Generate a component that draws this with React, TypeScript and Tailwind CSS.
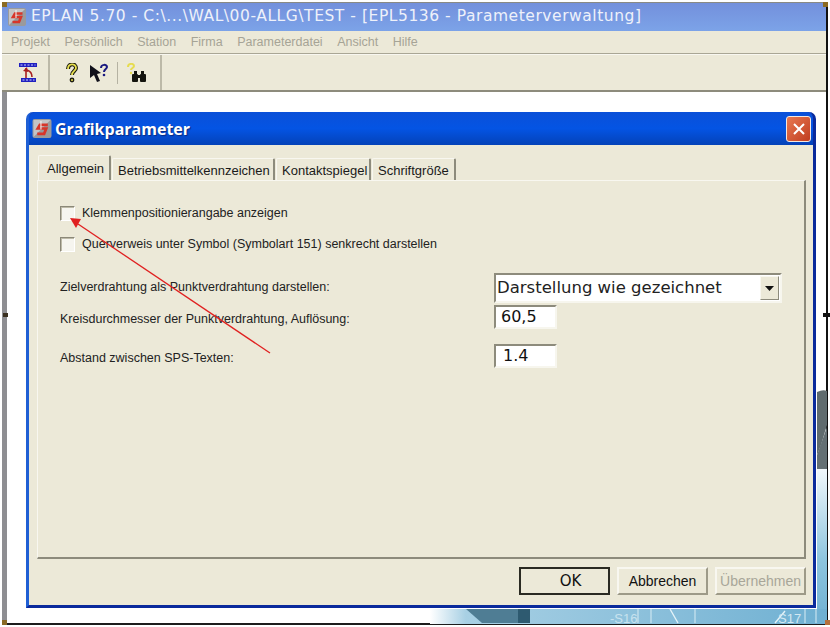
const tabs = [
  { label: "Betriebsmittelkennzeichen", width: "w-[163px]" },
  { label: "Kontaktspiegel", width: "w-[95px]" },
  { label: "Schriftgröße", width: "w-[84px]" },
];

const AppLogo = ({ className }: { className: string }) => {
  return (
    <svg viewBox="0 0 18 18" className={className}>
      <rect x="0" y="0" width="18" height="18" rx="2" fill="#9a9a9c" />
      <path d="M1 1h16L1 17z" fill="#c4c4c6" />
      <path d="M14.5 5.5H7L5 9h8l-2 5H4.5" fill="none" stroke="#d8352a" strokeWidth="2.6" />
      <path d="M8 2v8" stroke="#f4f4f4" strokeWidth="1" />
    </svg>
  );
};

const TransferIcon = () => {
  return (
    <svg viewBox="0 0 20 22" className="w-5 h-[22px]">
      <rect x="1" y="1" width="18" height="4" fill="#2020c0" />
      <path d="M2.5 3h15" stroke="#cfd0ff" strokeWidth="1" strokeDasharray="2 1.5" />
      <rect x="3" y="16" width="15" height="4" fill="#2020c0" />
      <path d="M4.5 18h12" stroke="#cfd0ff" strokeWidth="1" strokeDasharray="2 1.5" />
      <path d="M8 6v10M14 15c0-4-2-6-5-7" fill="none" stroke="#a82020" strokeWidth="1.6" />
      <path d="M5 9l4-4 1 5z" fill="#a82020" />
    </svg>
  );
};

const HelpIcon = () => {
  return (
    <svg viewBox="0 0 14 20" className="w-3.5 h-5">
      <path
        d="M3 6c0-6 8-6 8-1 0 3-4 3-4 7"
        fill="none"
        stroke="#1c1c10"
        strokeWidth="4"
      />
      <path
        d="M3 6c0-6 8-6 8-1 0 3-4 3-4 7"
        fill="none"
        stroke="#e8e050"
        strokeWidth="1.8"
      />
      <circle cx="7" cy="17" r="2.4" fill="#1c1c10" />
      <circle cx="7" cy="17" r="1" fill="#e8e050" />
    </svg>
  );
};

const PointerHelpIcon = () => {
  return (
    <svg viewBox="0 0 20 20" className="w-5 h-5">
      <path d="M1 2l11 8-4 1 3 7-3 1-3-7-4 3z" fill="#10101a" />
      <path d="M12 5c0-4 6-4 6-1 0 2-3 2-3 5" fill="none" stroke="#1a1a80" strokeWidth="2" />
      <circle cx="15" cy="12" r="1.3" fill="#1a1a80" />
    </svg>
  );
};

const FindIcon = () => {
  return (
    <svg viewBox="0 0 22 20" className="w-[22px] h-5">
      <path d="M3 4c0-4 6-4 6-1 0 2-3 2-3 4" fill="none" stroke="#e6dc50" strokeWidth="2" />
      <circle cx="6" cy="10" r="1.2" fill="#e6dc50" />
      <rect x="7" y="11" width="6" height="8" rx="1" fill="#14140e" />
      <rect x="15" y="11" width="6" height="8" rx="1" fill="#14140e" />
      <rect x="9" y="8" width="3" height="5" fill="#14140e" />
      <rect x="16" y="8" width="3" height="5" fill="#14140e" />
      <rect x="12" y="12" width="4" height="3" fill="#14140e" />
    </svg>
  );
};

const Checkbox = () => {
  return (
    <span className="block w-[15px] h-[15px] shrink-0 border border-t-[#8b8878] border-l-[#8b8878] border-r-white border-b-white bg-[#f6f5ef] shadow-[inset_1px_1px_0_#bdbaa8]" />
  );
};

const Field = ({ value, indent }: { value: string; indent: string }) => {
  return (
    <div
      className={`w-[63px] h-[24px] flex items-center bg-white border-2 border-t-[#8d8b7c] border-l-[#8d8b7c] border-r-[#f7f6ee] border-b-[#f7f6ee] text-[16px] text-[#111] font-['DejaVu_Sans',sans-serif] ${indent}`}
    >
      {value}
    </div>
  );
};

const DialogButton = ({
  label,
  kind,
}: {
  label: string;
  kind?: "default" | "disabled";
}) => {
  if (kind === "default") {
    return (
      <button className="w-[91px] h-[28px] bg-[#ece9d8] border-2 border-[#2a2a22] pl-[12px] text-[15px] text-[#111] font-['DejaVu_Sans',sans-serif]">
        {label}
      </button>
    );
  }
  return (
    <button
      className={`w-[91px] h-[28px] bg-[#ece9d8] border-2 border-t-[#f8f7f0] border-l-[#f8f7f0] border-r-[#9d9a88] border-b-[#9d9a88] text-[14px] ${
        kind === "disabled" ? "text-[#a8a699]" : "text-[#111]"
      }`}
    >
      {label}
    </button>
  );
};

const App = () => {
  return (
    <div className="relative w-[830px] h-[627px] overflow-hidden bg-white font-['Liberation_Sans',Arial,sans-serif] text-[12.5px] text-[#222]">
      <div className="ml-[2px] mr-[2px] mt-[2px] h-[623px] flex flex-col border-t border-t-[#8a8a84] border-b-2 border-b-[#1c1c1c] border-r-2 border-r-[#111]">
        {/* main window chrome */}
        <div className="h-[28px] shrink-0 flex items-center gap-[5px] pl-[6px] bg-gradient-to-b from-[#7390dc] to-[#7ca3e8]">
          <AppLogo className="w-[18px] h-[18px]" />
          <span className="text-[15.5px] tracking-[0.55px] text-[#eef1fa] font-['DejaVu_Sans',sans-serif] whitespace-nowrap">
            EPLAN 5.70 - C:\...\WAL\00-ALLG\TEST - [EPL5136 - Parameterverwaltung]
          </span>
        </div>
        <div className="h-[23px] shrink-0 flex items-center gap-[14.5px] pl-[9px] bg-[#ece9d8] border-b border-b-[#a9a695] text-[12.5px] text-[#a6a496]">
          <span>Projekt</span>
          <span>Persönlich</span>
          <span>Station</span>
          <span>Firma</span>
          <span>Parameterdatei</span>
          <span>Ansicht</span>
          <span>Hilfe</span>
        </div>
        <div className="h-[38px] shrink-0 flex items-center bg-[#ece9d8] border-t border-t-[#f8f7f0] border-b-2 border-b-[#8d8b7c]">
          <div className="w-[48px] h-full flex items-center pl-[16px] border-r-2 border-r-[#bcb9a8]">
            <TransferIcon />
          </div>
          <div className="w-[112px] h-full flex items-center pl-[15px] border-r-2 border-r-[#bcb9a8]">
            <HelpIcon />
            <span className="ml-[10px]">
              <PointerHelpIcon />
            </span>
            <span className="ml-[8px] w-px h-[22px] bg-[#b5b2a2]" />
            <span className="ml-[7px]">
              <FindIcon />
            </span>
          </div>
        </div>

        {/* client area */}
        <div className="flex-1 bg-white border-l-[5px] border-l-[#8e8e92] pl-[19px] pr-[11px] pt-[20px]">
          <div className="relative z-10 w-[790px] h-[496px] flex flex-col rounded-t-[7px] bg-[#0a46c8] border-x-[3px] border-b-[3px] border-l-[#1f5fd4] border-r-[#0a2a9c] border-b-[#0a2a9c]">
            <div className="h-[33px] shrink-0 flex items-center pl-[3px] pr-[2px] rounded-t-[7px] bg-gradient-to-b from-[#0a50d8] via-[#0454e4] to-[#0442b8]">
              <AppLogo className="w-[20px] h-[19px]" />
              <span className="ml-[3px] text-[16px] font-bold text-white font-['Open_Sans',sans-serif] [text-shadow:1px_1px_1px_#0a2a80]">
                Grafikparameter
              </span>
              <div className="ml-auto w-[25px] h-[26px] flex items-center justify-center rounded-[3px] border border-[#f4e8e0] bg-gradient-to-br from-[#e87850] to-[#c03c20]">
                <svg viewBox="0 0 14 14" className="w-[14px] h-[14px]">
                  <path d="M2 2l10 10M12 2L2 12" stroke="#fff" strokeWidth="2" />
                </svg>
              </div>
            </div>
            <div className="flex-1 flex flex-col bg-[#ece9d8] pl-[8px] pr-[7px] pt-[10px] pb-[10px]">
              {/* tabs */}
              <div className="flex h-[25px] shrink-0 items-end pl-[1px]">
                <div className="relative z-10 w-[73px] h-[25px] pl-[8px] pt-[3px] text-[13px] text-[#1a1a1a] border-t border-l border-t-[#f8f7f0] border-l-[#f8f7f0] border-r-2 border-r-[#8d8b7c] rounded-t-[2px] bg-[#ece9d8]">
                  Allgemein
                </div>
                {tabs.map((tab) => (
                  <div
                    key={tab.label}
                    className={`h-[22px] pl-[5px] pt-[2px] ml-[1px] text-[13px] whitespace-nowrap text-[#1a1a1a] border-t border-l border-t-[#f8f7f0] border-l-[#f8f7f0] border-r-2 border-r-[#8d8b7c] rounded-t-[2px] ${tab.width}`}
                  >
                    {tab.label}
                  </div>
                ))}
              </div>
              {/* panel */}
              <div className="flex-1 flex flex-col border-t border-l border-t-[#f8f7f0] border-l-[#f8f7f0] border-r-2 border-b-2 border-r-[#8d8b7c] border-b-[#8d8b7c] pl-[22px] pt-[25px]">
                <label className="flex items-center h-[15px] gap-[7px]">
                  <Checkbox />
                  <span>Klemmenpositionierangabe anzeigen</span>
                </label>
                <label className="flex items-center h-[15px] gap-[7px] mt-[16px]">
                  <Checkbox />
                  <span>Querverweis unter Symbol (Symbolart 151) senkrecht darstellen</span>
                </label>
                <div className="grid grid-cols-[434px_auto] mt-[21px] justify-start">
                  <div className="pt-[5px]">Zielverdrahtung als Punktverdrahtung darstellen:</div>
                  <div className="w-[288px] h-[30px] flex items-center justify-between bg-white border-2 border-t-[#8d8b7c] border-l-[#8d8b7c] border-r-[#f7f6ee] border-b-[#f7f6ee] pl-[1px] pr-[1px] text-[16.5px] text-[#222] font-['DejaVu_Sans',sans-serif]">
                    <span>Darstellung wie gezeichnet</span>
                    <span className="w-[19px] h-[24px] flex items-center justify-center bg-[#ece9d8] border border-t-[#f8f7f0] border-l-[#f8f7f0] border-r-[#8d8b7c] border-b-[#8d8b7c]">
                      <svg viewBox="0 0 9 5" className="w-[9px] h-[5px]">
                        <path d="M0 0h9L4.5 5z" fill="#111" />
                      </svg>
                    </span>
                  </div>
                  <div className="pt-[5px] mt-[2px]">Kreisdurchmesser der Punktverdrahtung, Auflösung:</div>
                  <div className="mt-[2px]">
                    <Field value="60,5" indent="pl-[5px]" />
                  </div>
                  <div className="pt-[5px] mt-[15px]">Abstand zwischen SPS-Texten:</div>
                  <div className="mt-[15px]">
                    <Field value="1.4" indent="pl-[7px]" />
                  </div>
                </div>
              </div>
              {/* buttons */}
              <div className="flex h-[28px] shrink-0 mt-[8px] justify-end gap-[7px] pr-[0px]">
                <DialogButton label="OK" kind="default" />
                <DialogButton label="Abbrechen" />
                <DialogButton label="Übernehmen" kind="disabled" />
              </div>
            </div>
          </div>
        </div>
      </div>

      {/* picture behind the dialog */}
      <svg viewBox="0 0 830 627" className="absolute inset-0 w-[830px] h-[627px]">
        <defs>
          <linearGradient id="bottomFade" x1="0" x2="1" y1="0" y2="0">
            <stop offset="0" stopColor="#ffffff" />
            <stop offset="0.09" stopColor="#a8d0e4" />
            <stop offset="1" stopColor="#6fb0d2" />
          </linearGradient>
          <linearGradient id="sideFade" x1="0" x2="0" y1="0" y2="1">
            <stop offset="0" stopColor="#f2f8fc" />
            <stop offset="0.6" stopColor="#8cc4de" />
            <stop offset="1" stopColor="#6fb0d2" />
          </linearGradient>
        </defs>
        <rect x="817" y="468" width="10" height="155" fill="url(#sideFade)" />
        <path d="M817 392q6-3 10-1v34l-6 20-4 10z" fill="#5f6b6e" />
        <path d="M817 455l10-28v42h-10z" fill="#647074" />
        <rect x="430" y="609" width="397" height="15" fill="url(#bottomFade)" />
        <path d="M466 609h64v14h-48z" fill="#4f7d94" />
        <path d="M518 609h12v14h-12z" fill="#2e5a70" />
        <path d="M638 609v14M651 609v14M695 609v14M805 609v14M816 609v14" stroke="#d8ecf4" strokeWidth="1" />
        <path d="M670 609l8 14M775 623l10-12" stroke="#e4f2f8" strokeWidth="1.4" />
        <text x="610" y="623" fontSize="13" fill="#c8e2ee" fontFamily="Liberation Sans">-S16</text>
        <text x="778" y="623" fontSize="13" fill="#d4e8f2" fontFamily="Liberation Sans">S17</text>
      </svg>

      {/* selection handles */}
      <span className="absolute left-[2px] top-[2px] w-[5px] h-[5px] bg-[#8a6a24]" />
      <span className="absolute right-[2px] top-[2px] w-[5px] h-[5px] bg-[#8a6a24]" />
      <span className="absolute left-[2px] bottom-[2px] w-[5px] h-[5px] bg-[#8a6a24]" />
      <span className="absolute right-0 bottom-[2px] w-[5px] h-[5px] bg-[#b4703c]" />
      <span className="absolute left-[3px] top-[313px] w-[5px] h-[4px] bg-[#3a3020]" />
      <span className="absolute right-0 top-[313px] w-[7px] h-[4px] bg-[#111]" />

      {/* annotation arrow */}
      <svg viewBox="0 0 830 627" className="absolute inset-0 z-20 w-[830px] h-[627px] pointer-events-none">
        <path d="M270 353L78 224" stroke="#e02020" strokeWidth="1.3" />
        <path d="M70 218l11 1-5 9z" fill="#e02020" />
      </svg>
    </div>
  );
};

export default App;
